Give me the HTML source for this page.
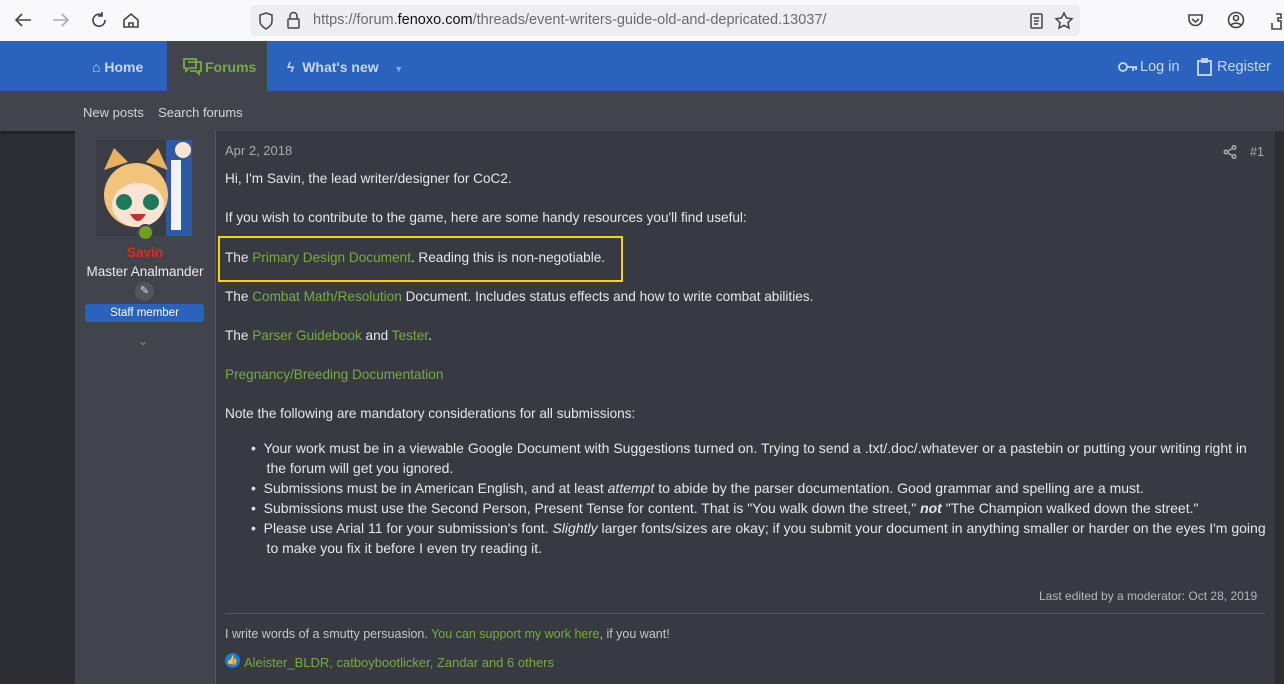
<!DOCTYPE html>
<html><head><meta charset="utf-8"><style>
*{margin:0;padding:0;box-sizing:border-box}
body{width:1284px;height:684px;overflow:hidden;background:#2c2e34;font-family:"Liberation Sans",sans-serif;position:relative}
.a{position:absolute;white-space:nowrap}
.g{color:#75ad3f}
.t{color:#e6e7e9;font-size:13.6px}
</style></head><body>
<div class="a" style="left:0;top:0;width:1284px;height:41px;background:#f9f9fb"></div>
<svg class="a" style="left:10;top:8px;left:10px" width="140" height="26" fill="none" stroke="#444" stroke-width="1.6">
<path d="M21 12H7M12 6l-6 6 6 6"/>
<path d="M57 12H43M52 6l6 6-6 6" stroke="#aaa"/>
<path d="M92 7a6 6 0 1 0 3 5M92 4v4h-4" />
<path d="M114 12l7-6 7 6v7h-14z M119 19v-4h4v4"/>
</svg>
<div class="a" style="left:250px;top:5px;width:830px;height:31px;background:#eeedf1;border-radius:5px"></div>
<svg class="a" style="left:258px;top:11px" width="46" height="20" fill="none" stroke="#444" stroke-width="1.5">
<path d="M8 2l6 2v6c0 4-3 6-6 8-3-2-6-4-6-8V4z"/>
<rect x="30" y="8" width="11" height="9" rx="1"/><path d="M32 8V5a3.5 3.5 0 0 1 7 0v3"/>
</svg>
<div class="a" style="left:313px;top:12px;font-size:14.5px;color:#6a6a70">https://forum.<span style="color:#111">fenoxo.com</span>/threads/event-writers-guide-old-and-depricated.13037/</div>
<svg class="a" style="left:1026px;top:10px" width="50" height="22" fill="none" stroke="#444" stroke-width="1.5">
<rect x="5" y="4" width="11" height="14" rx="1"/><path d="M8 8h5M8 11h5M8 14h4"/>
<path d="M38 3l2.5 5 5.5.8-4 3.8 1 5.4-5-2.6-5 2.6 1-5.4-4-3.8 5.5-.8z"/>
</svg>
<svg class="a" style="left:1186px;top:10px" width="98" height="22" fill="none" stroke="#444" stroke-width="1.6">
<path d="M3 5h13v4a6.5 6.5 0 0 1-13 0z M6 9l3.5 3 3.5-3"/>
<circle cx="50" cy="10" r="7.5"/><circle cx="50" cy="8" r="2.5"/><path d="M45 15a6 4 0 0 1 10 0"/>
<path d="M90 4h5v4h-3v3h3v8h-9v-6"/>
</svg>
<div class="a" style="left:0;top:41px;width:1284px;height:50px;background:#2a62bd"></div>
<div class="a" style="left:167px;top:41px;width:100px;height:50px;background:#42444c"></div>
<div class="a" style="left:92px;top:59px;font-size:14px;font-weight:bold;color:#c8d8f2">⌂ Home</div>
<svg class="a" style="left:183px;top:58px" width="20" height="18" fill="none" stroke="#75ad3f" stroke-width="1.8"><path d="M1 1h12v9H6l-3 3V10H1z"/><path d="M5 4h13v9h-2v3l-3-3H7"/></svg>
<div class="a" style="left:205px;top:59px;font-size:14px;font-weight:bold;color:#75ad3f">Forums</div>
<div class="a" style="left:287px;top:59px;font-size:14px;font-weight:bold;color:#c8d8f2">ϟ&nbsp;&nbsp;What's new&nbsp;&nbsp;&nbsp;&nbsp;<span style="font-size:9px;color:#8aa8dd">▼</span></div>
<svg class="a" style="left:1118px;top:60px" width="20" height="14" fill="none" stroke="#c8d8f2" stroke-width="1.8"><circle cx="5" cy="7" r="4"/><path d="M9 7h10M15 7v4M18 7v3"/></svg>
<div class="a" style="left:1140px;top:59px;font-size:14.5px;color:#c8d8f2">Log in</div>
<svg class="a" style="left:1197px;top:58px" width="16" height="18" fill="none" stroke="#c8d8f2" stroke-width="1.8"><rect x="1" y="3" width="13" height="14"/><path d="M5 1h5v3H5z"/></svg>
<div class="a" style="left:1217px;top:59px;font-size:14.5px;color:#c8d8f2">Register</div>
<div class="a" style="left:0;top:91px;width:1284px;height:40px;background:#42444c;box-shadow:0 2px 3px rgba(0,0,0,.35)"></div>
<div class="a" style="left:83px;top:105px;font-size:13px;color:#d6d7da">New posts&nbsp;&nbsp;&nbsp;&nbsp;Search forums</div>
<div class="a" style="left:75px;top:131px;width:140px;height:553px;background:#42444c"></div>
<div class="a" style="left:215px;top:131px;width:1060px;height:553px;background:#383a42;border-left:1px solid #555760"></div>
<div class="a" style="left:1275px;top:131px;width:9px;height:553px;background:#2c2e34"></div>
<div class="a" style="left:96px;top:140px;width:96px;height:96px;background:#3b3d44;overflow:hidden">
<svg width="96" height="96"><rect x="70" y="0" width="26" height="96" fill="#2d5aa5"/><rect x="75" y="20" width="10" height="70" fill="#f2f2f5"/>
<circle cx="40" cy="55" r="32" fill="#f2c37a"/><path d="M8 30l10-22 14 14z M72 30L62 8 50 22z" fill="#e9b060"/>
<ellipse cx="42" cy="65" rx="26" ry="22" fill="#fde4d2"/><circle cx="28" cy="62" r="8" fill="#1d7a5a"/><circle cx="55" cy="62" r="8" fill="#1d7a5a"/>
<path d="M34 74q8 14 16 0z" fill="#b33"/><circle cx="87" cy="10" r="8" fill="#fde4d2"/></svg></div>
<div class="a" style="left:137px;top:224px;width:17px;height:17px;border-radius:50%;background:#42444c"><div style="margin:2px;width:13px;height:13px;border-radius:50%;background:#6f9f20"></div></div>
<div class="a" style="left:75px;top:245px;width:140px;text-align:center;font-size:13.5px;font-weight:bold;color:#e8261b">Savin</div>
<div class="a" style="left:75px;top:264px;width:140px;text-align:center;font-size:13.5px;color:#ececec">Master Analmander</div>
<div class="a" style="left:135px;top:282px;width:19px;height:19px;border-radius:50%;background:#53555d;color:#ddd;font-size:11px;text-align:center;line-height:19px">✎</div>
<div class="a" style="left:85px;top:304px;width:119px;height:18px;background:#2a62bd;border-radius:3px;text-align:center;font-size:11.5px;line-height:18px;color:#fff">Staff member</div>
<div class="a" style="left:138px;top:334px;font-size:12px;color:#75ad3f">⌄</div>
<div class="a" style="left:225px;top:143px;font-size:13px;color:#a9abb0">Apr 2, 2018</div>
<svg class="a" style="left:1223px;top:145px" width="14" height="14" fill="none" stroke="#a9abb0" stroke-width="1.5"><circle cx="11" cy="2.5" r="1.8"/><circle cx="3" cy="7" r="1.8"/><circle cx="11" cy="11.5" r="1.8"/><path d="M5 6l4.5-2.5M5 8l4.5 2.5"/></svg>
<div class="a" style="left:1250px;top:145px;font-size:12.5px;color:#a9abb0">#1</div>
<div class="a t" style="left:225px;top:171px">Hi, I'm Savin, the lead writer/designer for CoC2.</div>
<div class="a t" style="left:225px;top:210px">If you wish to contribute to the game, here are some handy resources you'll find useful:</div>
<div class="a" style="left:218px;top:236px;width:405px;height:46px;border:2px solid #f5d800"></div>
<div class="a t" style="left:225px;top:250px">The <span class="g">Primary Design Document</span>. Reading this is non-negotiable.</div>
<div class="a t" style="left:225px;top:289px">The <span class="g">Combat Math/Resolution</span> Document. Includes status effects and how to write combat abilities.</div>
<div class="a t" style="left:225px;top:328px">The <span class="g">Parser Guidebook</span> and <span class="g">Tester</span>.</div>
<div class="a t g" style="left:225px;top:367px;color:#75ad3f">Pregnancy/Breeding Documentation</div>
<div class="a t" style="left:225px;top:406px">Note the following are mandatory considerations for all submissions:</div>
<div class="a t" style="left:251px;top:438px;line-height:20px;font-size:14px">
•&nbsp;&nbsp;Your work must be in a viewable Google Document with Suggestions turned on. Trying to send a .txt/.doc/.whatever or a pastebin or putting your writing right in<br>
&nbsp;&nbsp;&nbsp;&nbsp;the forum will get you ignored.<br>
•&nbsp;&nbsp;Submissions must be in American English, and at least <i>attempt</i> to abide by the parser documentation. Good grammar and spelling are a must.<br>
•&nbsp;&nbsp;Submissions must use the Second Person, Present Tense for content. That is "You walk down the street," <b><i>not</i></b> "The Champion walked down the street."<br>
•&nbsp;&nbsp;Please use Arial 11 for your submission's font. <i>Slightly</i> larger fonts/sizes are okay; if you submit your document in anything smaller or harder on the eyes I'm going<br>
&nbsp;&nbsp;&nbsp;&nbsp;to make you fix it before I even try reading it.</div>
<div class="a" style="left:1039px;top:589px;font-size:12px;color:#b5b7bc">Last edited by a moderator: Oct 28, 2019</div>
<div class="a" style="left:225px;top:613px;width:1040px;height:1px;background:#55575f"></div>
<div class="a" style="left:225px;top:627px;font-size:12.5px;color:#c5c7cc">I write words of a smutty persuasion. <span class="g">You can support my work here</span>, if you want!</div>
<div class="a" style="left:225px;top:653px;width:15px;height:15px;border-radius:50%;background:#1f7ae0;color:#fff;font-size:9px;text-align:center;line-height:15px">👍</div>
<div class="a g" style="left:244px;top:655px;font-size:13px">Aleister_BLDR, catboybootlicker, Zandar and 6 others</div>
</body></html>
